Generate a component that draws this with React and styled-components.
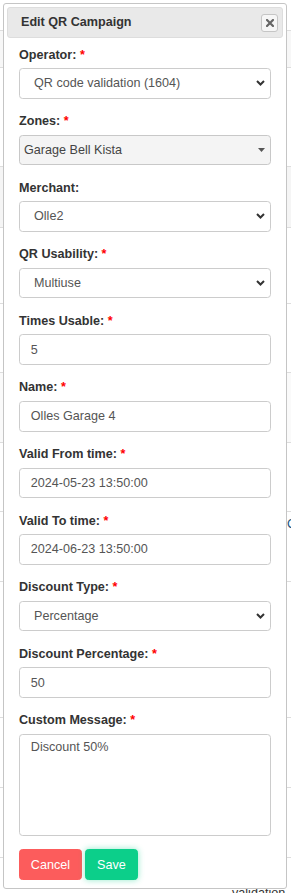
import React from "react";
import styled, { createGlobalStyle } from "styled-components";

const Global = createGlobalStyle`
  html, body { margin: 0; padding: 0; background: #fff; }
  body { font-family: "Liberation Sans", Arial, sans-serif; font-size: 12.6px; color: #333; overflow: hidden; }
  * { box-sizing: border-box; }
`;

const Page = styled.div`
  position: relative;
  width: 291px;
  height: 893px;
  overflow: hidden;
`;

const Table = styled.div`
  display: flex;
  flex-direction: column;
`;

const Row = styled.div`
  height: ${(p) => p.$h}px;
  flex: none;
  background: ${(p) => p.$bg || "#fff"};
  border-bottom: ${(p) => (p.$last ? "none" : "1px solid #ddd")};
  display: flex;
  justify-content: flex-end;
  align-items: ${(p) => (p.$align || "flex-start")};
  padding-top: ${(p) => p.$pt || 0}px;
`;

const CellLink = styled.span`
  width: 4px;
  overflow: hidden;
  white-space: nowrap;
  color: #23527c;
  font-size: 12.6px;
  line-height: 18px;
`;

const CellText = styled.span`
  width: 59px;
  white-space: nowrap;
  color: #333;
  line-height: 18px;
`;

const Modal = styled.div`
  position: absolute;
  left: 3px;
  top: 3px;
  width: 284px;
  background: #fff;
  border: 1px solid #c5c5c5;
  border-radius: 3px;
  padding: 3px;
  display: flex;
  flex-direction: column;
`;

const Header = styled.div`
  height: 31px;
  background: #e9e9e9;
  border: 1px solid #dddddd;
  border-radius: 3px;
  padding: 0 4px 0 13px;
  display: flex;
  align-items: center;
  justify-content: space-between;
`;

const Title = styled.span`
  font-weight: bold;
  color: #333;
  line-height: 18px;
  margin-top: -1px;
`;

const CloseButton = styled.button`
  width: 17px;
  height: 18px;
  padding: 0;
  margin: 1px 0 0 0;
  border: 1px solid #c5c5c5;
  border-radius: 3px;
  background: #f6f6f6;
  display: flex;
  align-items: center;
  justify-content: center;
`;

const Body = styled.div`
  padding: 7.5px 12px 5px 12px;
  display: flex;
  flex-direction: column;
`;

const Group = styled.div`
  margin-bottom: 13.5px;
  display: flex;
  flex-direction: column;
`;

const Label = styled.label`
  display: block;
  font-weight: bold;
  color: #333;
  line-height: 18px;
  margin-bottom: 4.5px;
`;

const Req = styled.span`
  color: #f00;
  font-weight: bold;
`;

const Input = styled.div`
  height: 30.6px;
  border: 1px solid #ccc;
  border-radius: 3.6px;
  background: #fff;
  padding: 0 10.8px;
  display: flex;
  align-items: center;
  color: #555;
  line-height: 18px;
  white-space: nowrap;
`;

const SelectBox = styled.div`
  height: 30.6px;
  border: 1px solid #ccc;
  border-radius: 3.6px;
  background: #fff;
  padding: 0 5px 0 14px;
  display: flex;
  align-items: center;
  justify-content: space-between;
  color: #555;
  line-height: 18px;
  white-space: nowrap;
`;

const Select2Box = styled.div`
  height: 30.6px;
  border: 1px solid #c8c8c8;
  border-radius: 3.6px;
  background: #f4f4f4;
  padding: 0 5px 0 4px;
  display: flex;
  align-items: center;
  justify-content: space-between;
  color: #444;
  line-height: 18px;
  white-space: nowrap;
`;

const TextArea = styled.div`
  height: 102px;
  border: 1px solid #ccc;
  border-radius: 3.6px;
  background: #fff;
  padding: 3.5px 10.8px;
  color: #555;
  line-height: 18px;
`;

const Buttons = styled.div`
  display: flex;
  gap: 3.5px;
`;

const Button = styled.button`
  height: 30.8px;
  padding: 0 10.8px;
  border: 1px solid ${(p) => p.$color};
  border-radius: 3.6px;
  background: ${(p) => p.$color};
  color: #fff;
  font-family: "Liberation Sans", Arial, sans-serif;
  font-size: 12.6px;
  line-height: 18px;
  box-shadow: ${(p) => (p.$glow ? "0 0 6px rgba(10, 208, 138, 0.45)" : "none")};
`;

const Chevron = () => (
  <svg width="9" height="6" viewBox="0 0 9 6">
    <path d="M1 1l3.5 3.5L8 1" fill="none" stroke="#333" strokeWidth="2" />
  </svg>
);

const Caret = () => (
  <svg width="7" height="4" viewBox="0 0 7 4">
    <path d="M0 0h7L3.5 4z" fill="#555" />
  </svg>
);

const Field = ({ label, required, children }) => (
  <Group>
    <Label>
      {label}
      {required && <> <Req>*</Req></>}
    </Label>
    {children}
  </Group>
);

const rows = [
  { h: 31 },
  { h: 37, bg: "#f7f7f7" },
  { h: 99 },
  { h: 61, bg: "#f5f5f5" },
  { h: 76 },
  { h: 69 },
  { h: 70, bg: "#fafafa" },
  { h: 69 },
  { h: 70, link: true },
  { h: 136 },
  { h: 70 },
  { h: 70 },
  { h: 35, last: true, text: "validation" },
];

export default function App() {
  return (
    <>
      <Global />
      <Page>
        <Table>
          {rows.map((r, i) => (
            <Row key={i} $h={r.h} $bg={r.bg} $last={r.last} $pt={r.link ? 3 : r.text ? 26 : 0}>
              {r.link && <CellLink>QR</CellLink>}
              {r.text && <CellText>{r.text}</CellText>}
            </Row>
          ))}
        </Table>
        <Modal>
          <Header>
            <Title>Edit QR Campaign</Title>
            <CloseButton aria-label="close">
              <svg width="8" height="8" viewBox="0 0 8 8">
                <path d="M1 1l6 6M7 1L1 7" stroke="#666" strokeWidth="2.2" strokeLinecap="square" />
              </svg>
            </CloseButton>
          </Header>
          <Body>
            <Field label="Operator:" required>
              <SelectBox>
                <span>QR code validation (1604)</span>
                <Chevron />
              </SelectBox>
            </Field>
            <Field label="Zones:" required>
              <Select2Box>
                <span>Garage Bell Kista</span>
                <Caret />
              </Select2Box>
            </Field>
            <Field label="Merchant:">
              <SelectBox>
                <span>Olle2</span>
                <Chevron />
              </SelectBox>
            </Field>
            <Field label="QR Usability:" required>
              <SelectBox>
                <span>Multiuse</span>
                <Chevron />
              </SelectBox>
            </Field>
            <Field label="Times Usable:" required>
              <Input>5</Input>
            </Field>
            <Field label="Name:" required>
              <Input>Olles Garage 4</Input>
            </Field>
            <Field label="Valid From time:" required>
              <Input>2024-05-23 13:50:00</Input>
            </Field>
            <Field label="Valid To time:" required>
              <Input>2024-06-23 13:50:00</Input>
            </Field>
            <Field label="Discount Type:" required>
              <SelectBox>
                <span>Percentage</span>
                <Chevron />
              </SelectBox>
            </Field>
            <Field label="Discount Percentage:" required>
              <Input>50</Input>
            </Field>
            <Field label="Custom Message:" required>
              <TextArea>Discount 50%</TextArea>
            </Field>
            <Buttons>
              <Button $color="#fc5c5c">Cancel</Button>
              <Button $color="#0ccf8a" $glow>Save</Button>
            </Buttons>
          </Body>
        </Modal>
      </Page>
    </>
  );
}
